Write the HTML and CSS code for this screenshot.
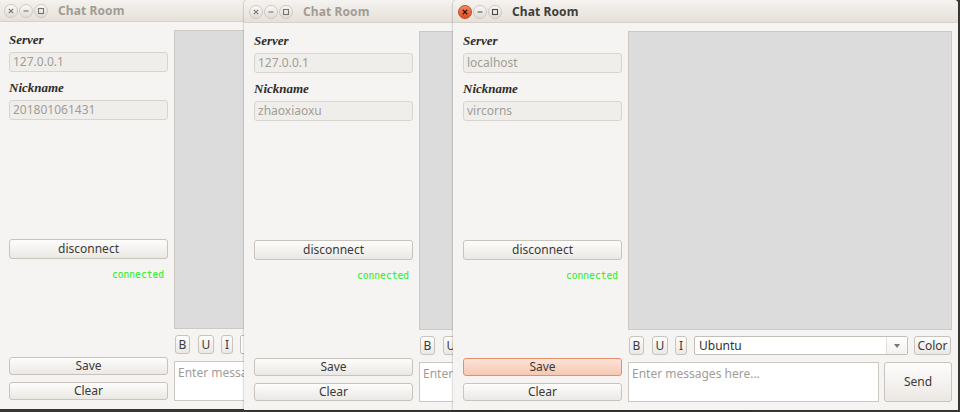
FILE: index.html
```html
<!DOCTYPE html>
<html>
<head>
<meta charset="utf-8">
<title>Chat Room</title>
<link rel="stylesheet" href="styles.css">
</head>
<body>
<div class="desktop">

  <div class="window w1 inactive">
    <div class="titlebar">
      <div class="controls">
        <span class="ctl close"><svg viewBox="0 0 8 8" class="sym"><path d="M1.8 1.8L6.2 6.2M6.2 1.8L1.8 6.2"/></svg></span>
        <span class="ctl"><svg viewBox="0 0 8 8" class="sym"><path d="M1.5 4H6.5"/></svg></span>
        <span class="ctl"><svg viewBox="0 0 8 8" class="sym"><rect x="1.5" y="1.5" width="5" height="5"/></svg></span>
      </div>
      <span class="title">Chat Room</span>
    </div>
    <div class="content">
      <div class="left">
        <div class="label">Server</div>
        <div class="field">127.0.0.1</div>
        <div class="label second">Nickname</div>
        <div class="field">201801061431</div>
        <div class="btn disconnect">disconnect</div>
        <div class="status">connected</div>
        <div class="bottom">
          <div class="btn small">Save</div>
          <div class="btn small">Clear</div>
        </div>
      </div>
      <div class="right">
        <div class="display"></div>
        <div class="toolbar">
          <div class="tbtn tb-b">B</div>
          <div class="tbtn tb-u">U</div>
          <div class="tbtn tb-i">I</div>
          <div class="combo"><span class="combo-text">Ubuntu</span><span class="combo-arrow"><svg viewBox="0 0 6 4" class="tri"><path d="M0 0H6L3 4Z"/></svg></span></div>
          <div class="tbtn tb-color">Color</div>
        </div>
        <div class="msgrow">
          <div class="msg">Enter messages here...</div>
          <div class="btn send">Send</div>
        </div>
      </div>
    </div>
  </div>

  <div class="window w2 inactive">
    <div class="titlebar">
      <div class="controls">
        <span class="ctl close"><svg viewBox="0 0 8 8" class="sym"><path d="M1.8 1.8L6.2 6.2M6.2 1.8L1.8 6.2"/></svg></span>
        <span class="ctl"><svg viewBox="0 0 8 8" class="sym"><path d="M1.5 4H6.5"/></svg></span>
        <span class="ctl"><svg viewBox="0 0 8 8" class="sym"><rect x="1.5" y="1.5" width="5" height="5"/></svg></span>
      </div>
      <span class="title">Chat Room</span>
    </div>
    <div class="content">
      <div class="left">
        <div class="label">Server</div>
        <div class="field">127.0.0.1</div>
        <div class="label second">Nickname</div>
        <div class="field">zhaoxiaoxu</div>
        <div class="btn disconnect">disconnect</div>
        <div class="status">connected</div>
        <div class="bottom">
          <div class="btn small">Save</div>
          <div class="btn small">Clear</div>
        </div>
      </div>
      <div class="right">
        <div class="display"></div>
        <div class="toolbar">
          <div class="tbtn tb-b">B</div>
          <div class="tbtn tb-u">U</div>
          <div class="tbtn tb-i">I</div>
          <div class="combo"><span class="combo-text">Ubuntu</span><span class="combo-arrow"><svg viewBox="0 0 6 4" class="tri"><path d="M0 0H6L3 4Z"/></svg></span></div>
          <div class="tbtn tb-color">Color</div>
        </div>
        <div class="msgrow">
          <div class="msg">Enter messages here...</div>
          <div class="btn send">Send</div>
        </div>
      </div>
    </div>
  </div>

  <div class="window w3 active">
    <div class="titlebar">
      <div class="controls">
        <span class="ctl close"><svg viewBox="0 0 8 8" class="sym"><path d="M1.8 1.8L6.2 6.2M6.2 1.8L1.8 6.2"/></svg></span>
        <span class="ctl"><svg viewBox="0 0 8 8" class="sym"><path d="M1.5 4H6.5"/></svg></span>
        <span class="ctl"><svg viewBox="0 0 8 8" class="sym"><rect x="1.5" y="1.5" width="5" height="5"/></svg></span>
      </div>
      <span class="title">Chat Room</span>
    </div>
    <div class="content">
      <div class="left">
        <div class="label">Server</div>
        <div class="field">localhost</div>
        <div class="label second">Nickname</div>
        <div class="field">vircorns</div>
        <div class="btn disconnect">disconnect</div>
        <div class="status">connected</div>
        <div class="bottom">
          <div class="btn small hot">Save</div>
          <div class="btn small">Clear</div>
        </div>
      </div>
      <div class="right">
        <div class="display"></div>
        <div class="toolbar">
          <div class="tbtn tb-b">B</div>
          <div class="tbtn tb-u">U</div>
          <div class="tbtn tb-i">I</div>
          <div class="combo"><span class="combo-text">Ubuntu</span><span class="combo-arrow"><svg viewBox="0 0 6 4" class="tri"><path d="M0 0H6L3 4Z"/></svg></span></div>
          <div class="tbtn tb-color">Color</div>
        </div>
        <div class="msgrow">
          <div class="msg">Enter messages here...</div>
          <div class="btn send">Send</div>
        </div>
      </div>
    </div>
  </div>

</div>
</body>
</html>
```

FILE: styles.css
```css
* { box-sizing: border-box; }

body {
  margin: 0;
  width: 960px;
  height: 412px;
  overflow: hidden;
  background: #3a3936;
  font-family: "Noto Sans", "DejaVu Sans", sans-serif;
  font-size: 12px;
  color: #3c3c3c;
}

.desktop {
  position: relative;
  width: 960px;
  height: 412px;
}

.window {
  position: absolute;
  width: 505px;
  height: 410px;
  background: #f5f4f2;
  display: flex;
  flex-direction: column;
  border-radius: 4px 4px 0 0;
  overflow: hidden;
  box-shadow: 0 0 2px rgba(0, 0, 0, 0.45);
}

.w1 { left: -1px; top: -1px; }
.w2 { left: 244px; top: 0; }
.w3 { left: 453px; top: 0; }

.titlebar {
  height: 23px;
  flex: none;
  display: flex;
  align-items: center;
  padding-left: 5px;
  padding-top: 1px;
  background: linear-gradient(#f5f3f0, #e5e0d9);
  border-bottom: 1px solid #d7d1c9;
}

.controls {
  display: flex;
  gap: 1px;
}

.ctl {
  width: 14px;
  height: 14px;
  border-radius: 50%;
  border: 1px solid #cdc8c1;
  background: linear-gradient(#faf9f7, #dfdbd5);
  display: flex;
  align-items: center;
  justify-content: center;
}

.sym {
  width: 8px;
  height: 8px;
  fill: none;
  stroke: #77736d;
  stroke-width: 1.1;
}

.active .ctl .sym { stroke: #4d4a46; }

.active .ctl.close {
  background: linear-gradient(#f58a62, #df4e22);
  border-color: #c2491f;
}

.active .ctl.close .sym { stroke: #3b1509; stroke-width: 1.3; }

.title {
  margin-left: 10px;
  font-weight: bold;
  font-size: 12px;
  color: #a19c95;
  letter-spacing: 0.1px;
}

.active .title { color: #3f3d3a; }

.content {
  flex: 1;
  display: flex;
  gap: 6px;
  padding: 8px 6px 8px 10px;
}

.left {
  width: 159px;
  flex: none;
  display: flex;
  flex-direction: column;
  padding-bottom: 1px;
}

.label {
  height: 16px;
  padding-top: 2px;
  line-height: 14px;
  font-family: "Liberation Serif", "Times New Roman", serif;
  font-style: italic;
  font-weight: bold;
  font-size: 13px;
  color: #2e2d2b;
  margin-top: 1px;
}

.label.second { margin-top: 7px; }

.field {
  margin-top: 5px;
  height: 20px;
  line-height: 18px;
  border: 1px solid #d9d4cd;
  border-radius: 3px;
  background: #f0eeeb;
  color: #a19d98;
  padding-left: 3px;
  font-size: 12px;
}

.btn {
  height: 20px;
  line-height: 18px;
  border: 1px solid #c8c3bc;
  border-radius: 3px;
  background: linear-gradient(#fdfdfc, #ebe8e4);
  text-align: center;
  color: #3a3a3a;
  font-size: 12px;
}

.disconnect { margin-top: 119px; }

.status {
  margin-top: 10px;
  height: 12px;
  line-height: 12px;
  text-align: right;
  padding-right: 4px;
  font-family: "DejaVu Sans Mono", "Liberation Mono", monospace;
  font-size: 9.6px;
  color: #22ee22;
}

.bottom {
  margin-top: auto;
  display: flex;
  flex-direction: column;
  gap: 7px;
}

.btn.small {
  height: 18px;
  line-height: 16px;
}

.btn.hot {
  background: linear-gradient(#fce3d7, #f7c8b2);
  border-color: #e58e6c;
}

.right {
  flex: 1;
  display: flex;
  flex-direction: column;
  min-width: 0;
}

.display {
  flex: 1;
  background: #dcdcdc;
  border: 1px solid #cec9c2;
}

.toolbar {
  margin-top: 6px;
  height: 19px;
  flex: none;
  display: flex;
}

.tbtn {
  height: 19px;
  line-height: 17px;
  border: 1px solid #c8c3bc;
  border-radius: 3px;
  background: linear-gradient(#fdfdfc, #ebe8e4);
  text-align: center;
  font-size: 12px;
  color: #3a3a3a;
  flex: none;
}

.tb-b { width: 15px; margin-left: 1px; }
.tb-u { width: 16px; margin-left: 8px; }
.tb-i { width: 12px; margin-left: 7px; }
.tb-color { width: 37px; margin-left: 6px; margin-right: 1px; }

.combo {
  flex: 1;
  margin-left: 7px;
  display: flex;
  border: 1px solid #c3beb7;
  border-radius: 2px;
  background: #ffffff;
  min-width: 0;
}

.combo-text {
  flex: 1;
  padding-left: 4px;
  line-height: 17px;
  color: #2f2f2f;
  font-size: 12px;
}

.combo-arrow {
  width: 21px;
  border-left: 1px solid #e2dfdb;
  display: flex;
  align-items: center;
  justify-content: center;
  background: linear-gradient(#ffffff, #f3f1ee);
}

.tri {
  width: 6px;
  height: 4px;
  fill: #7c7873;
}

.msgrow {
  margin-top: 7px;
  height: 40px;
  flex: none;
  display: flex;
  gap: 5px;
}

.msg {
  flex: 1;
  background: #ffffff;
  border: 1px solid #cdc8c1;
  padding: 2px 3px;
  color: #a19c97;
  font-size: 12px;
  line-height: 18px;
}

.btn.send {
  width: 68px;
  height: 40px;
  line-height: 38px;
  flex: none;
}
```
